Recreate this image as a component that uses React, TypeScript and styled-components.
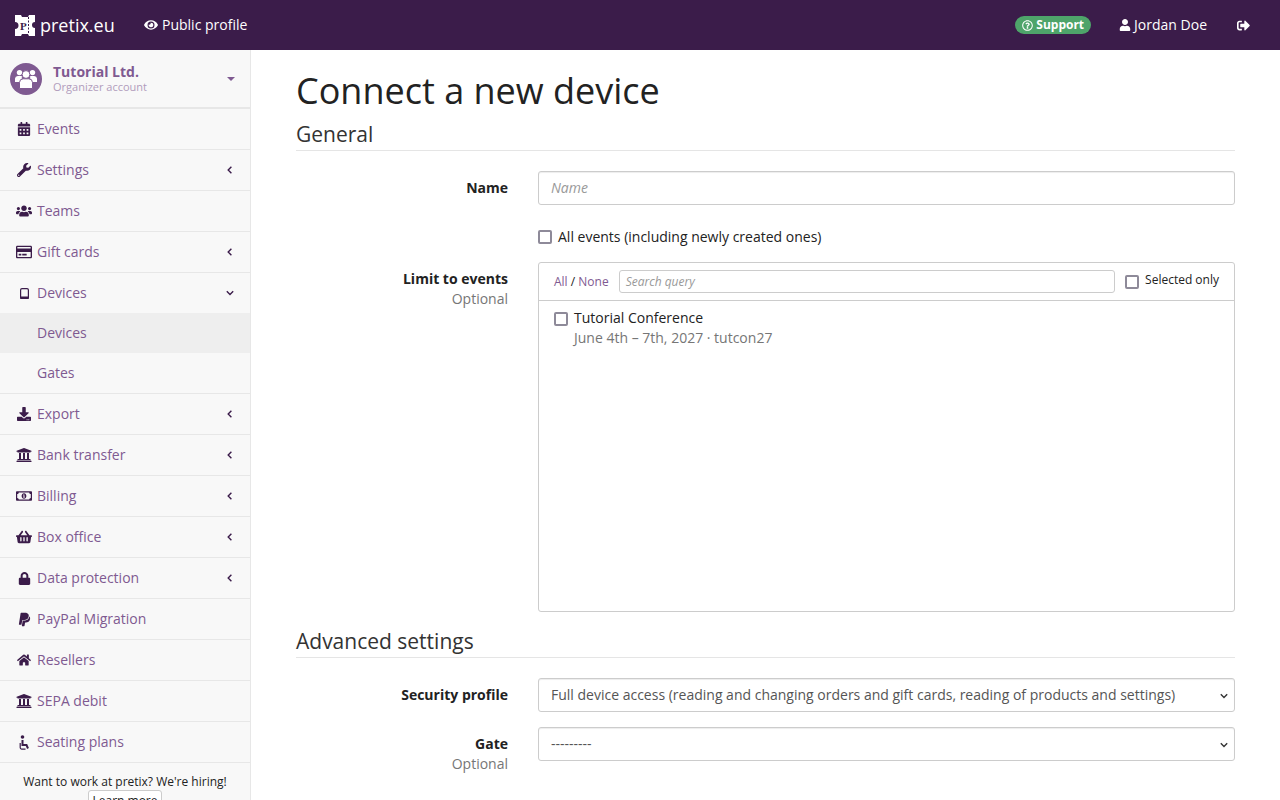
import React from 'react';
import styled, { createGlobalStyle } from 'styled-components';
import {
  FaCalendarAlt, FaWrench, FaUsers, FaRegCreditCard, FaDownload, FaUniversity, FaRegMoneyBillAlt,
  FaShoppingBasket, FaLock, FaPaypal, FaHome, FaEye, FaUser, FaSignOutAlt, FaRegQuestionCircle,
} from 'react-icons/fa';

const Global = createGlobalStyle`
  html, body { margin: 0; padding: 0; height: 100%; overflow: hidden; background: #fff; }
  body { font-family: "Open Sans", sans-serif; font-size: 14px; line-height: 20px; color: #222; }
  * { box-sizing: border-box; }
`;

const Page = styled.div`height: 800px; overflow: hidden; display: flex; flex-direction: column;`;
const Top = styled.header`height: 50px; flex: none; background: #3b1c4a; color: #fff; display: flex; align-items: center; padding: 0 0 0 15px;`;
const Brand = styled.div`display: flex; align-items: center; gap: 5px; font-size: 18px; margin-right: 27px; width: 102px; flex: none;`;
const TopLink = styled.span<{ $mr?: number; $gap?: number }>`display: inline-flex; align-items: center; gap: ${p => p.$gap ?? 4}px; color: #fff; margin-right: ${p => p.$mr ?? 0}px;`;
const Spacer = styled.div`flex: 1;`;
const Pill = styled.span`display: inline-flex; align-items: center; gap: 3px; height: 18px; padding: 0 7px; background: #4ea46a; border-radius: 9px; color: #fff; font-size: 12px; font-weight: 700; margin-right: 28px;`;
const Body = styled.div`flex: 1; display: flex; min-height: 0;`;
const Side = styled.aside`width: 251px; flex: none; background: #f8f8f8; border-right: 1px solid #e7e7e7; overflow: hidden;`;
const Org = styled.div`height: 59px; border-bottom: 2px solid #e7e7e7; display: flex; align-items: center; padding: 0 15px 0 10px;`;
const Avatar = styled.div`width: 32px; height: 32px; border-radius: 50%; background: #7f5a91; display: flex; align-items: center; justify-content: center; color: #fff; flex: none; margin-right: 11px;`;
const OrgText = styled.div`flex: 1; display: flex; flex-direction: column;`;
const OrgName = styled.span`color: #7f5a91; font-weight: 700; line-height: 16px;`;
const OrgSub = styled.span`color: #b19cbc; font-size: 11px; line-height: 14px;`;
const Caret = styled.span`width: 0; height: 0; border-left: 4px solid transparent; border-right: 4px solid transparent; border-top: 4px solid #7f5a91;`;
const NavRow = styled.div<{ $open?: boolean }>`height: ${p => (p.$open ? 40 : 41)}px; border-bottom: ${p => (p.$open ? '0' : '1px solid #e7e7e7')}; display: flex; align-items: center; padding: 0 16px 0 15px; color: #7f5a91;`;
const NavIcon = styled.span`width: 18px; display: inline-flex; justify-content: center; color: #3b1c4a; margin-right: 4px; flex: none;`;
const NavLabel = styled.span`flex: 1;`;
const NavArrow = styled.span`color: #3b1c4a; display: inline-flex; width: 8px; justify-content: center;`;
const SubRow = styled.div<{ $active?: boolean; $last?: boolean }>`height: ${p => (p.$last ? 41 : 40)}px; padding-left: 37px; display: flex; align-items: center; color: #7f5a91; background: ${p => (p.$active ? '#eee' : 'transparent')}; border-bottom: ${p => (p.$last ? '1px solid #e7e7e7' : '0')};`;
const Hiring = styled.div`text-align: center; font-size: 12px; line-height: 17px; padding-top: 10px; color: #222;`;
const LearnMore = styled.span`display: inline-block; border: 1px solid #ccc; border-radius: 3px; padding: 1px 3px; background: #fff; line-height: 18px;`;
const Main = styled.main`flex: 1; padding: 0 45px; min-width: 0;`;
const Title = styled.h1`font-size: 36px; font-weight: 400; line-height: 40px; margin: 21px 0 0; color: #222;`;
const Legend = styled.h2<{ $top: number; $bottom: number }>`font-size: 21px; font-weight: 400; line-height: 29px; margin: ${p => p.$top}px 0 ${p => p.$bottom}px; border-bottom: 1px solid #e5e5e5; padding-bottom: 1px; color: #333;`;
const Row = styled.div<{ $mb?: number }>`display: grid; grid-template-columns: 212px 1fr; column-gap: 30px; margin-bottom: ${p => p.$mb ?? 15}px;`;
const Label = styled.div<{ $pt?: number }>`text-align: right; padding-top: ${p => p.$pt ?? 7}px; font-weight: 700; color: #222;`;
const Optional = styled.div`font-weight: 400; color: #767676;`;
const Input = styled.div`height: 34px; border: 1px solid #ccc; border-radius: 3px; box-shadow: inset 0 1px 1px rgba(0,0,0,.075); padding: 6px 12px; color: #999; font-style: italic; background: #fff;`;
const Check = styled.span<{ $mt?: number }>`display: inline-block; width: 14px; height: 14px; margin-top: ${p => p.$mt ?? 0}px; border: 2px solid #8e8a99; border-radius: 2px; background: #fff; flex: none;`;
const CheckLine = styled.div`display: flex; align-items: center; gap: 6px; color: #222;`;
const Panel = styled.div`height: 350px; border: 1px solid #ccc; border-radius: 3px;`;
const PanelHead = styled.div`height: 38px; border-bottom: 1px solid #ccc; display: flex; align-items: center; padding: 0 15px; font-size: 12px; color: #222;`;
const LinkText = styled.span`color: #7f5a91;`;
const Search = styled.div`flex: 1; height: 23px; margin: 0 10px; border: 1px solid #ccc; border-radius: 3px; padding: 2px 6px; font-style: italic; color: #999; line-height: 17px;`;
const SelectedOnly = styled.div`display: flex; align-items: center; gap: 6px;`;
const SelectedText = styled.span`position: relative; top: -2px;`;
const PanelItem = styled.div`display: grid; grid-template-columns: 14px 1fr; column-gap: 6px; padding: 7px 15px;`;
const EventDate = styled.div`color: #767676; grid-column: 2;`;
const Select = styled.div`height: 34px; border: 1px solid #ccc; border-radius: 3px; box-shadow: inset 0 1px 1px rgba(0,0,0,.075); padding: 6px 12px; color: #555; background: #fff; position: relative;`;
const SelectArrow = styled.span`position: absolute; right: 6px; top: 13px; color: #333; display: inline-flex;`;

const Logo = () => (
  <svg width="20" height="21" viewBox="0 0 20 21" aria-hidden="true">
    <path fill="#fff" d="M0 0h6l1 2h6l1-2h6v7a3 3 0 0 0 0 6v8h-6l-1-2H7l-1 2H0v-7a3 3 0 0 0 0-7z" />
    <path stroke="#3b1c4a" strokeWidth="1" strokeDasharray="2 1.5" d="M13.5 2v17" />
    <text x="5" y="14.5" fontFamily="Liberation Serif, serif" fontWeight="700" fontSize="11" fill="#3b1c4a">P</text>
  </svg>
);

const Tablet = () => (
  <svg width="9" height="11" viewBox="0 0 9 11" aria-hidden="true">
    <rect x="0.6" y="0.6" width="7.8" height="9.8" rx="1.4" fill="none" stroke="currentColor" strokeWidth="1.2" />
    <rect x="0" y="8.6" width="9" height="2.4" rx="1" fill="currentColor" />
  </svg>
);

const Seat = () => (
  <svg width="11" height="15" viewBox="0 0 11 15" aria-hidden="true">
    <circle cx="3.5" cy="2" r="1.8" fill="currentColor" />
    <path fill="none" stroke="currentColor" strokeWidth="2" d="M3.5 5v5h4l1.5 3.5" />
    <path fill="none" stroke="currentColor" strokeWidth="1.2" d="M1.2 8v4.5a1.6 1.6 0 0 0 1.6 1.6h3.7" />
  </svg>
);

const Group = () => (
  <svg width="22" height="20" viewBox="0 0 22 20" aria-hidden="true">
    <circle cx="4.5" cy="3.6" r="2.7" fill="#fff" />
    <circle cx="17.5" cy="3.6" r="2.7" fill="#fff" />
    <path fill="#fff" d="M0 13V9.5A2.8 2.8 0 0 1 2.8 7h4v6zM22 13V9.5A2.8 2.8 0 0 0 19.2 7h-4v6z" />
    <circle cx="11" cy="5.5" r="3.9" fill="#fff" stroke="#7f5a91" strokeWidth="1" />
    <path fill="#fff" stroke="#7f5a91" strokeWidth="1" d="M4.5 19.5v-6A3.8 3.8 0 0 1 8.3 9.8h5.4a3.8 3.8 0 0 1 3.8 3.7v6z" />
  </svg>
);

const Angle = ({ down }: { down?: boolean }) => (
  <svg width="8" height="8" viewBox="0 0 8 8" aria-hidden="true">
    <path fill="none" stroke="currentColor" strokeWidth="1.4" d={down ? 'M0.8 2.2 4 5.4l3.2-3.2' : 'M5.4 0.8 2.2 4l3.2 3.2'} />
  </svg>
);

const items: [React.ReactNode, string, boolean][] = [
  [<FaDownload size={14} />, 'Export', true],
  [<FaUniversity size={16} />, 'Bank transfer', true],
  [<FaRegMoneyBillAlt size={16} />, 'Billing', true],
  [<FaShoppingBasket size={16} />, 'Box office', true],
  [<FaLock size={13} />, 'Data protection', true],
  [<FaPaypal size={15} />, 'PayPal Migration', false],
  [<FaHome size={14} />, 'Resellers', false],
  [<FaUniversity size={16} />, 'SEPA debit', false],
  [<Seat />, 'Seating plans', false],
];

const Nav = ({ icon, label, arrow }: { icon: React.ReactNode; label: string; arrow?: boolean }) => (
  <NavRow><NavIcon>{icon}</NavIcon><NavLabel>{label}</NavLabel>{arrow && <NavArrow><Angle /></NavArrow>}</NavRow>
);

export default function App() {
  return (
    <Page>
      <Global />
      <Top>
        <Brand><Logo />pretix.eu</Brand>
        <TopLink><FaEye size={14} />Public profile</TopLink>
        <Spacer />
        <Pill><FaRegQuestionCircle size={11} />Support</Pill>
        <TopLink $mr={30} $gap={3}><FaUser size={12} />Jordan Doe</TopLink>
        <TopLink $mr={30}><FaSignOutAlt size={13} /></TopLink>
      </Top>
      <Body>
        <Side>
          <Org>
            <Avatar><Group /></Avatar>
            <OrgText><OrgName>Tutorial Ltd.</OrgName><OrgSub>Organizer account</OrgSub></OrgText>
            <Caret />
          </Org>
          <Nav icon={<FaCalendarAlt size={14} />} label="Events" />
          <Nav icon={<FaWrench size={14} />} label="Settings" arrow />
          <Nav icon={<FaUsers size={16} />} label="Teams" />
          <Nav icon={<FaRegCreditCard size={16} />} label="Gift cards" arrow />
          <NavRow $open><NavIcon><Tablet /></NavIcon><NavLabel>Devices</NavLabel><NavArrow><Angle down /></NavArrow></NavRow>
          <SubRow $active>Devices</SubRow>
          <SubRow $last>Gates</SubRow>
          {items.map(([icon, label, arrow]) => <Nav key={label} icon={icon} label={label} arrow={arrow} />)}
          <Hiring>Want to work at pretix? We're hiring!<br /><LearnMore>Learn more</LearnMore></Hiring>
        </Side>
        <Main>
          <Title>Connect a new device</Title>
          <Legend $top={9} $bottom={20}>General</Legend>
          <Row $mb={22}>
            <Label>Name</Label>
            <Input>Name</Input>
          </Row>
          <Row $mb={15}>
            <div />
            <CheckLine><Check />All events (including newly created ones)</CheckLine>
          </Row>
          <Row $mb={0}>
            <Label>Limit to events<Optional>Optional</Optional></Label>
            <Panel>
              <PanelHead>
                <span><LinkText>All</LinkText> / <LinkText>None</LinkText></span>
                <Search>Search query</Search>
                <SelectedOnly><Check /><SelectedText>Selected only</SelectedText></SelectedOnly>
              </PanelHead>
              <PanelItem>
                <Check $mt={4} /><span>Tutorial Conference</span>
                <EventDate>June 4th – 7th, 2027 · tutcon27</EventDate>
              </PanelItem>
            </Panel>
          </Row>
          <Legend $top={15} $bottom={20}>Advanced settings</Legend>
          <Row>
            <Label>Security profile</Label>
            <Select>Full device access (reading and changing orders and gift cards, reading of products and settings)<SelectArrow><Angle down /></SelectArrow></Select>
          </Row>
          <Row>
            <Label>Gate<Optional>Optional</Optional></Label>
            <Select>---------<SelectArrow><Angle down /></SelectArrow></Select>
          </Row>
        </Main>
      </Body>
    </Page>
  );
}
